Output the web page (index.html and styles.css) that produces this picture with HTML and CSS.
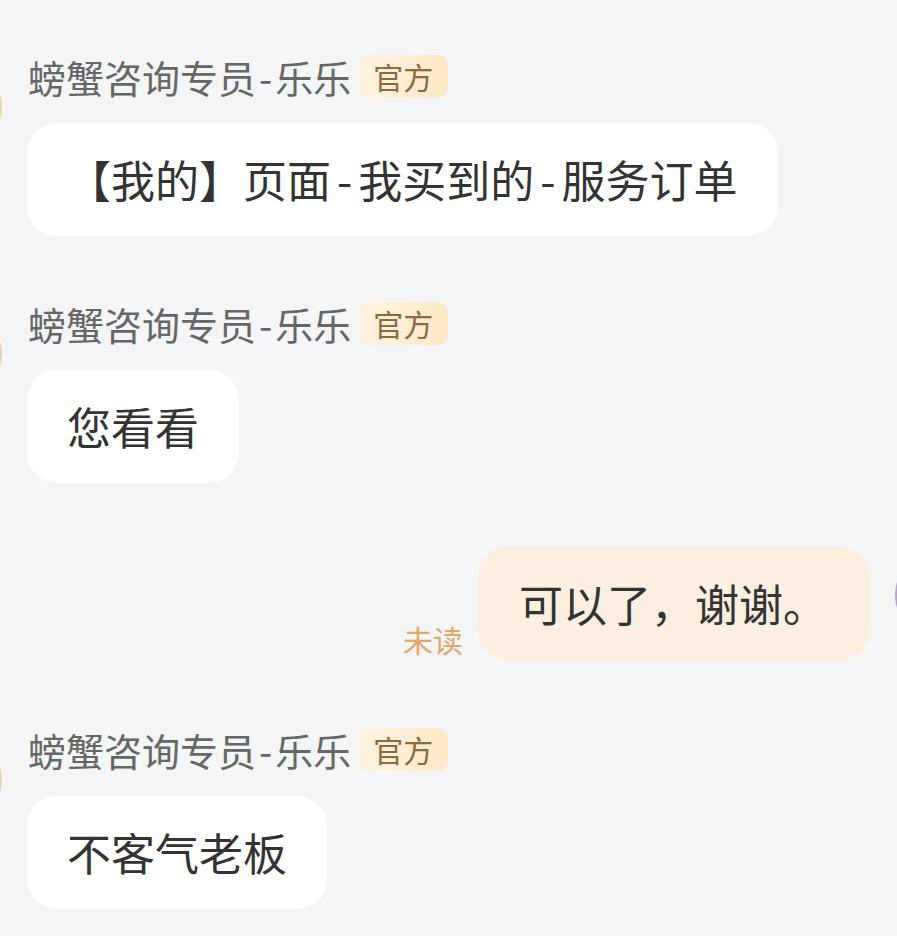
FILE: index.html
```html
<!DOCTYPE html>
<html lang="zh-CN">
<head>
<meta charset="utf-8">
<title>聊天</title>
<link rel="stylesheet" href="styles.css">
</head>
<body>
<div class="chat">
  <div class="msg msg-left">
    <div class="avatar avatar-staff"></div>
    <div class="content">
      <div class="name-row"><span class="name">螃蟹咨询专员<span class="dash-sm">-</span>乐乐</span><span class="badge">官方</span></div>
      <div class="bubble bubble-in">【我的】页面<span class="dash">-</span>我买到的<span class="dash">-</span>服务订单</div>
    </div>
  </div>
  <div class="msg msg-left">
    <div class="avatar avatar-staff"></div>
    <div class="content">
      <div class="name-row"><span class="name">螃蟹咨询专员<span class="dash-sm">-</span>乐乐</span><span class="badge">官方</span></div>
      <div class="bubble bubble-in">您看看</div>
    </div>
  </div>
  <div class="msg msg-right">
    <span class="unread">未读</span>
    <div class="bubble bubble-out">可以了，谢谢。</div>
    <div class="avatar avatar-user"></div>
  </div>
  <div class="msg msg-left">
    <div class="avatar avatar-staff"></div>
    <div class="content">
      <div class="name-row"><span class="name">螃蟹咨询专员<span class="dash-sm">-</span>乐乐</span><span class="badge">官方</span></div>
      <div class="bubble bubble-in">不客气老板</div>
    </div>
  </div>
</div>
</body>
</html>
```
FILE: styles.css
```css
html, body {
  margin: 0;
  padding: 0;
}
body {
  background: #f4f5f7;
  font-family: "Noto Sans CJK SC", "Noto Sans", sans-serif;
  overflow: hidden;
  width: 897px;
  height: 936px;
}
.chat {
  display: flex;
  flex-direction: column;
  gap: 66px;
  padding-top: 55px;
}
.msg {
  display: flex;
  gap: 24px;
}
.msg-left {
  margin-left: -82px;
  align-items: flex-start;
}
.msg-right {
  justify-content: flex-end;
  align-items: flex-start;
  margin-right: -82px;
  margin-bottom: 2px;
  gap: 0;
}
.avatar {
  width: 84px;
  height: 84px;
  border-radius: 50%;
  flex: none;
  box-sizing: border-box;
}
.avatar-staff {
  margin-top: 10px;
  background: #ecd3a3;
}
.avatar-user {
  margin-top: 4px;
  margin-left: 25px;
  background: #f7f2f8;
  border: 3px solid #b9a0c8;
}
.content {
  display: flex;
  flex-direction: column;
  align-items: flex-start;
  margin-left: 1px;
}
.name-row {
  display: flex;
  align-items: center;
  height: 43px;
  gap: 7px;
  margin-left: 1px;
}
.name {
  font-size: 38px;
  line-height: 43px;
  color: #666666;
}
.dash-sm {
  margin: 0 3px;
}
.badge {
  height: 43px;
  line-height: 43px;
  padding: 0 15px;
  border-radius: 10px;
  font-size: 30px;
  color: #8b6a3e;
  background: linear-gradient(90deg, #fdf3e3 0%, #fde8c6 100%);
}
.bubble {
  font-size: 44px;
  line-height: 47px;
  padding: 33px 40px;
  border-radius: 30px;
  color: #333333;
  white-space: nowrap;
}
.dash {
  margin: 0 6px;
}
.bubble-in {
  margin-top: 25px;
  background: #ffffff;
}
.bubble-out {
  margin-top: -2px;
  padding: 33px 43px 33px 41px;
  background: #fcefe0;
}
.unread {
  align-self: flex-end;
  font-size: 30px;
  line-height: 30px;
  color: #e2a867;
  margin-right: 15px;
  margin-bottom: 6px;
}
```
